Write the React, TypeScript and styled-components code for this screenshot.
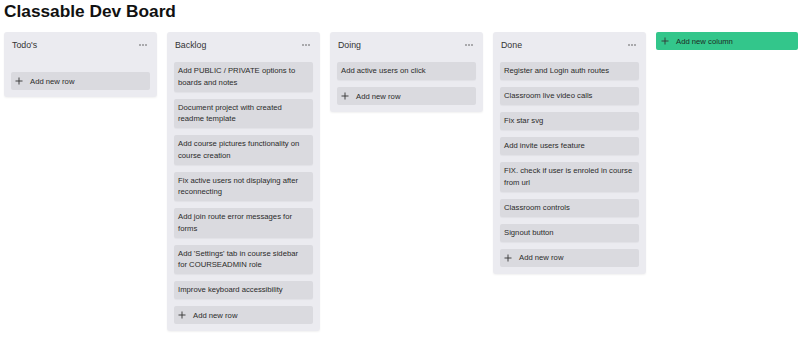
import React from "react";
import styled, { createGlobalStyle } from "styled-components";

const GlobalStyle = createGlobalStyle`
  html, body { margin: 0; padding: 0; background: #ffffff; }
  body { font-family: "Liberation Sans", Arial, sans-serif; color: #222; }
  * { box-sizing: border-box; }
`;

const Page = styled.div`
  padding: 2px 4px 4px 4px;
`;

const Title = styled.h1`
  margin: 0 0 11px 0;
  font-size: 17.3px;
  line-height: 19px;
  font-weight: 700;
  color: #111;
`;

const Board = styled.div`
  display: flex;
  align-items: flex-start;
  gap: 10px;
`;

const Column = styled.div`
  width: 153px;
  flex: 0 0 153px;
  background: #ebebf0;
  border-radius: 3px;
  padding: 7px;
  display: flex;
  flex-direction: column;
  gap: 7px;
  box-shadow: 0 1px 2px rgba(0, 0, 0, 0.06);
`;

const Header = styled.div`
  height: 16px;
  display: flex;
  justify-content: space-between;
  align-items: flex-start;
  padding: 0 3px 0 1px;
`;

const HeaderTitle = styled.span`
  font-size: 8.8px;
  line-height: 12px;
  color: #333;
`;

const List = styled.div`
  display: flex;
  flex-direction: column;
  gap: 7px;
  min-height: 3px;
`;

const Card = styled.div`
  background: #dadadf;
  border-radius: 2px;
  padding: 3.25px 5px 3.25px 4px;
  font-size: 7.7px;
  line-height: 11.5px;
  color: #2a2a2a;
  box-shadow: 0 1px 1px rgba(0, 0, 0, 0.04);
`;

const AddRow = styled.div`
  background: #dadadf;
  border-radius: 2px;
  height: 18px;
  display: flex;
  align-items: center;
  gap: 7px;
  padding: 0 4px;
  font-size: 7.7px;
  color: #2a2a2a;
`;

const AddColumn = styled.div`
  width: 142px;
  flex: 0 0 142px;
  height: 18px;
  background: #33c68b;
  border-radius: 2px;
  display: flex;
  align-items: center;
  gap: 7px;
  padding: 0 5px;
  font-size: 7.7px;
  color: #1d2b24;
`;

const Plus = () => (
  <svg width="8" height="8" viewBox="0 0 8 8" aria-hidden>
    <path d="M4 0.5V7.5M0.5 4H7.5" stroke="#333" strokeWidth="0.9" fill="none" />
  </svg>
);

const Dots = () => (
  <svg width="8" height="6" viewBox="0 0 8 6" aria-hidden style={{ marginTop: 3 }}>
    <circle cx="1" cy="3" r="0.8" fill="#555" />
    <circle cx="4" cy="3" r="0.8" fill="#555" />
    <circle cx="7" cy="3" r="0.8" fill="#555" />
  </svg>
);

const columns: { title: string; rows: string[] }[] = [
  { title: "Todo's", rows: [] },
  {
    title: "Backlog",
    rows: [
      "Add PUBLIC / PRIVATE options to boards and notes",
      "Document project with created readme template",
      "Add course pictures functionality on course creation",
      "Fix active users not displaying after reconnecting",
      "Add join route error messages for forms",
      "Add 'Settings' tab in course sidebar for COURSEADMIN role",
      "Improve keyboard accessibility",
    ],
  },
  { title: "Doing", rows: ["Add active users on click"] },
  {
    title: "Done",
    rows: [
      "Register and Login auth routes",
      "Classroom live video calls",
      "Fix star svg",
      "Add invite users feature",
      "FIX. check if user is enroled in course from url",
      "Classroom controls",
      "Signout button",
    ],
  },
];

export default function App() {
  return (
    <Page>
      <GlobalStyle />
      <Title>Classable Dev Board</Title>
      <Board>
        {columns.map((c) => (
          <Column key={c.title}>
            <Header>
              <HeaderTitle>{c.title}</HeaderTitle>
              <Dots />
            </Header>
            <List>
              {c.rows.map((r) => (
                <Card key={r}>{r}</Card>
              ))}
            </List>
            <AddRow>
              <Plus />
              <span>Add new row</span>
            </AddRow>
          </Column>
        ))}
        <AddColumn>
          <Plus />
          <span>Add new column</span>
        </AddColumn>
      </Board>
    </Page>
  );
}
